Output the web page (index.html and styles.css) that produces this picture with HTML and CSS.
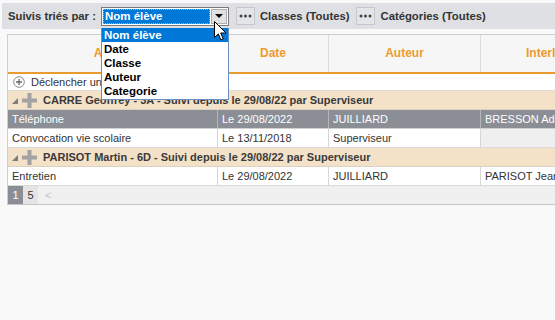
FILE: index.html
```html
<!DOCTYPE html>
<html lang="fr">
<head>
<meta charset="utf-8">
<link rel="stylesheet" href="styles.css">
</head>
<body>
<div class="toolbar">
  <span class="lbl">Suivis triés par :</span>
  <div class="select">
    <span class="sel-val">Nom élève</span>
    <span class="sel-btn"><span class="tri"></span></span>
  </div>
  <span class="dots"><svg width="13" height="4" viewBox="0 0 13 4"><circle cx="2" cy="2" r="1.5" fill="#444"/><circle cx="6.5" cy="2" r="1.5" fill="#444"/><circle cx="11" cy="2" r="1.5" fill="#444"/></svg></span>
  <span class="lbl">Classes (Toutes)</span>
  <span class="dots"><svg width="13" height="4" viewBox="0 0 13 4"><circle cx="2" cy="2" r="1.5" fill="#444"/><circle cx="6.5" cy="2" r="1.5" fill="#444"/><circle cx="11" cy="2" r="1.5" fill="#444"/></svg></span>
  <span class="lbl">Catégories (Toutes)</span>
</div>

<div class="grid">
  <div class="row head">
    <div class="cell">Action</div>
    <div class="cell">Date</div>
    <div class="cell">Auteur</div>
    <div class="cell">Interlocuteur</div>
  </div>
  <div class="row add">
    <span class="circ"><svg width="12" height="12" viewBox="0 0 12 12"><circle cx="6" cy="6" r="5.3" fill="#fff" stroke="#8a8a8a" stroke-width="1"/><path d="M6 3v6M3 6h6" stroke="#666" stroke-width="1.3"/></svg></span>
    <span>Déclencher un suivi</span>
  </div>
  <div class="row group">
    <span class="corner"></span>
    <span class="plus"><svg width="15" height="15" viewBox="0 0 15 15"><path d="M5.5 0h4v5.5H15v4H9.5V15h-4V9.5H0v-4h5.5z" fill="#a2a2a2"/></svg></span>
    <span>CARRE Geoffrey - 3A - Suivi depuis le 29/08/22 par Superviseur</span>
  </div>
  <div class="row data sel">
    <div class="cell">Téléphone</div>
    <div class="cell">Le 29/08/2022</div>
    <div class="cell">JUILLIARD</div>
    <div class="cell">BRESSON Adeline</div>
  </div>
  <div class="row data">
    <div class="cell">Convocation vie scolaire</div>
    <div class="cell">Le 13/11/2018</div>
    <div class="cell">Superviseur</div>
    <div class="cell empty"></div>
  </div>
  <div class="row group">
    <span class="corner"></span>
    <span class="plus"><svg width="15" height="15" viewBox="0 0 15 15"><path d="M5.5 0h4v5.5H15v4H9.5V15h-4V9.5H0v-4h5.5z" fill="#a2a2a2"/></svg></span>
    <span>PARISOT Martin - 6D - Suivi depuis le 29/08/22 par Superviseur</span>
  </div>
  <div class="row data">
    <div class="cell">Entretien</div>
    <div class="cell">Le 29/08/2022</div>
    <div class="cell">JUILLIARD</div>
    <div class="cell">PARISOT Jean</div>
  </div>
  <div class="row pager">
    <span class="pg cur">1</span>
    <span class="pg">5</span>
    <span class="prev">&lt;</span>
  </div>
</div>

<ul class="dropdown">
  <li class="on">Nom élève</li>
  <li>Date</li>
  <li>Classe</li>
  <li>Auteur</li>
  <li>Categorie</li>
</ul>

<svg class="cursor" width="13" height="20" viewBox="0 0 13 20"><path d="M0.5 0.5v16l3.8-3.6 2.6 6 2.4-1-2.6-5.9h5.3z" fill="#fff" stroke="#000" stroke-width="1" stroke-linejoin="round"/></svg>
</body>
</html>
```
FILE: styles.css
```css
html, body {
  margin: 0;
  padding: 0;
}
body {
  width: 555px;
  height: 320px;
  overflow: hidden;
  background: #f9f9f9;
  font-family: "Liberation Sans", Arial, sans-serif;
  font-size: 11px;
  color: #333;
  position: relative;
}
.toolbar {
  margin: 3px 0 0 2px;
  height: 26px;
  background: #dfe0e3;
  display: flex;
  align-items: center;
  padding-left: 6px;
  white-space: nowrap;
}
.lbl {
  font-weight: bold;
  font-size: 11.3px;
  color: #333;
}
.select {
  margin-left: 5px;
  width: 128px;
  height: 19px;
  box-sizing: border-box;
  border: 1px solid #7a7a7a;
  background: #fff;
  display: flex;
  padding: 1px;
}
.sel-val {
  flex: 1;
  background: #0078d7;
  color: #fff;
  font-weight: bold;
  font-size: 11.5px;
  line-height: 15px;
  padding-left: 2px;
  outline: 1px dotted #f3a43a;
  outline-offset: -1px;
}
.sel-btn {
  width: 16px;
  margin-left: 1px;
  background: #e1e1e1;
  border: 1px solid #adadad;
  box-sizing: border-box;
  display: flex;
  align-items: center;
  justify-content: center;
}
.tri {
  width: 0;
  height: 0;
  border-left: 4px solid transparent;
  border-right: 4px solid transparent;
  border-top: 4px solid #000;
}
.dots {
  margin: 0 5px 0 7px;
  width: 19px;
  height: 18px;
  box-sizing: border-box;
  border: 1px solid #c6c7ca;
  background: #e4e5e7;
  display: flex;
  align-items: center;
  justify-content: center;
}
.grid {
  margin: 5px 0 0 7px;
  width: 700px;
  border-left: 1px solid #cfcfcf;
  border-top: 1px solid #cfcfcf;
  border-bottom: 1px solid #c6c6c6;
  background: #f0f0f0;
}
.row {
  display: grid;
  grid-template-columns: 210px 111px 152px 227px;
  box-sizing: border-box;
}
.cell {
  padding-left: 4px;
  border-right: 1px solid #d6d6d6;
  white-space: nowrap;
  overflow: hidden;
}
.head {
  height: 39px;
  background: #f6f6f6;
  border-bottom: 2px solid #e99a30;
}
.head .cell {
  color: #ec9b2e;
  font-weight: bold;
  font-size: 12px;
  text-align: center;
  line-height: 37px;
  padding: 0;
  border-right-color: #dcdcdc;
}
.head .cell:last-child {
  text-align: left;
  padding-left: 45px;
}
.add {
  display: flex;
  align-items: center;
  height: 17px;
  background: #fff;
  border-bottom: 1px solid #dadada;
  padding-left: 5px;
  font-size: 11px;
  color: #333;
}
.circ {
  display: flex;
  margin-right: 6px;
}
.group {
  display: flex;
  align-items: center;
  height: 19px;
  background: #f3e1c8;
  border-bottom: 1px solid #dcd2c4;
  font-weight: bold;
  font-size: 11px;
  color: #3a3a3a;
  padding-left: 4px;
  white-space: nowrap;
}
.corner {
  width: 0;
  height: 0;
  border-left: 6px solid transparent;
  border-bottom: 6px solid #7d7d7d;
  margin: 2px 4px 0 0;
}
.plus {
  display: flex;
  margin-right: 6px;
}
.data {
  height: 19px;
  background: #fff;
  border-bottom: 1px solid #d9d9d9;
  line-height: 18px;
  font-size: 11px;
  color: #333;
}
.data .empty {
  background: #efefef;
}
.data.sel {
  background: #8b8e95;
  color: #fff;
  border-bottom-color: #d0d0d0;
}
.data.sel .cell {
  border-right-color: #b4b6ba;
}
.pager {
  display: flex;
  height: 18px;
  align-items: stretch;
  background: #f0f0f0;
}
.pg {
  width: 15px;
  text-align: center;
  line-height: 18px;
  background: #e4e4e4;
  color: #333;
  font-size: 11px;
}
.pg.cur {
  background: #8b8e95;
  color: #fff;
}
.prev {
  margin-left: 7px;
  line-height: 18px;
  color: #c4c4c4;
  font-size: 11px;
}
.dropdown {
  position: absolute;
  left: 101px;
  top: 28px;
  width: 128px;
  box-sizing: border-box;
  margin: 0;
  padding: 0 0 1px;
  list-style: none;
  background: #fff;
  border: 1px solid #6b8fc0;
  border-top: 0;
}
.dropdown li {
  height: 14px;
  line-height: 14px;
  padding-left: 2px;
  font-weight: bold;
  font-size: 11.5px;
  color: #000;
}
.dropdown li.on {
  background: #0078d7;
  color: #fff;
}
.cursor {
  position: absolute;
  left: 214px;
  top: 21px;
}
```
